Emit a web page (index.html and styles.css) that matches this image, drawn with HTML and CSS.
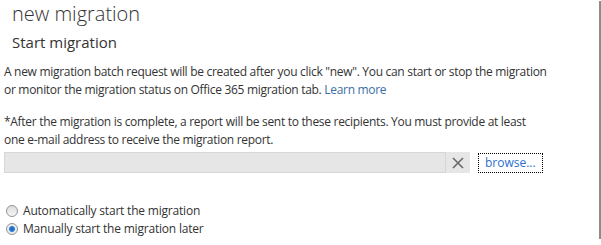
FILE: index.html
```html
<!DOCTYPE html>
<html lang="en">
<head>
    <meta charset="UTF-8">
    <title>new migration</title>
    <link rel="stylesheet" href="styles.css">
</head>
<body>
    <div class="dialog">
        <h1 class="title">new migration</h1>
        <h2 class="subtitle">Start migration</h2>

        <p class="info">A new migration batch request will be created after you click "new". You can start or stop the migration<br>
            or monitor the migration status on Office 365 migration tab. <a href="#" class="link">Learn more</a></p>

        <p class="info">*After the migration is complete, a report will be sent to these recipients. You must provide at least<br>
            one e-mail address to receive the migration report.</p>

        <div class="picker">
            <input type="text" class="picker-input">
            <button class="btn-clear" title="Clear">
                <svg width="12" height="12" viewBox="0 0 12 12"><path d="M1 1 L11 11 M11 1 L1 11" stroke="#6a6a6a" stroke-width="1.6"/></svg>
            </button>
            <button class="btn-browse">browse...</button>
        </div>

        <div class="options">
            <label class="option"><input type="radio" name="start"> Automatically start the migration</label>
            <label class="option"><input type="radio" name="start" checked> Manually start the migration later</label>
        </div>
    </div>
</body>
</html>
```

FILE: styles.css
```css
body {
    margin: 0;
    background-color: #fff;
    font-family: "Open Sans", Arial, sans-serif;
    color: #333;
}
.dialog {
    height: 238px;
    margin-top: 7px;
    border-right: 2px solid #8c8c8c;
    padding: 0 0 0 4px;
}
.title {
    font-size: 20px;
    font-weight: 300;
    color: #333;
    margin: -6px 0 0 8px;
    line-height: 26px;
}
.subtitle {
    font-size: 15px;
    font-weight: 400;
    color: #333;
    margin: 5px 0 0 8px;
    line-height: 20px;
}
.info {
    font-size: 12px;
    letter-spacing: -0.3px;
    line-height: 18px;
    margin: 14px 0 0 0;
}
.subtitle + .info {
    margin-top: 11px;
}
.link {
    color: #3a6ea5;
    text-decoration: none;
}
.picker {
    display: flex;
    align-items: center;
    margin-top: 3px;
}
.picker-input {
    width: 440px;
    height: 19px;
    padding: 0;
    border: 1px solid #d6d6d6;
    background-color: #e6e6e6;
    box-sizing: content-box;
}
.btn-clear {
    width: 24px;
    height: 21px;
    padding: 0;
    border: none;
    background-color: #e6e6e6;
    display: flex;
    align-items: center;
    justify-content: center;
}
.btn-browse {
    margin-left: 8px;
    height: 20px;
    padding: 0 6px;
    border: 1px dotted #000;
    background-color: #fff;
    color: #2a6fd0;
    font-family: "Open Sans", Arial, sans-serif;
    font-size: 12px;
}
.options {
    margin-top: 29px;
}
.option {
    display: flex;
    align-items: center;
    font-size: 12px;
    letter-spacing: -0.2px;
    line-height: 18px;
}
.option input {
    appearance: none;
    -webkit-appearance: none;
    margin: 0 5px 0 2px;
    width: 12px;
    height: 12px;
    border: 1px solid #939393;
    border-radius: 50%;
    background: linear-gradient(#dcdcdc, #f6f6f6);
    box-sizing: border-box;
}
.option input:checked {
    background: radial-gradient(circle, #1d5fb8 0, #2f7fd8 2.5px, #eaeaea 3.5px, #f6f6f6 100%);
}
```
